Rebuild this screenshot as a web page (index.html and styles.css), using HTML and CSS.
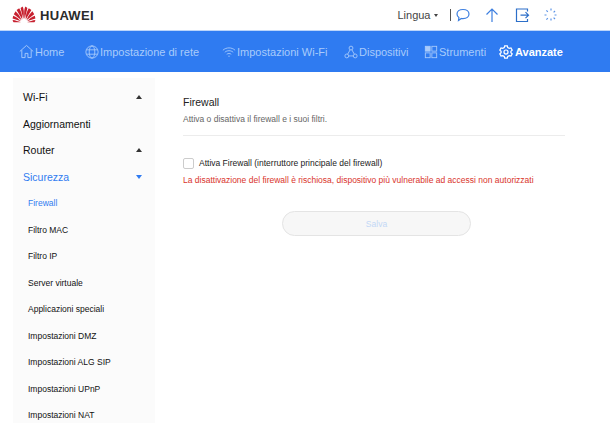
FILE: index.html
```html
<!DOCTYPE html>
<html lang="it">
<head>
    <meta charset="UTF-8">
    <title>Firewall</title>
    <link rel="stylesheet" href="styles.css">
</head>
<body>
    <header class="topbar">
        <div class="brand">
            <svg class="brand-logo" viewBox="0 0 24 18" width="24" height="18">
                <g fill="#c7202f">
                    <path d="M11.3 13 8.6 1.9 10.6.4c1.4 2.500 1.600 7.500.7 12.600z"/>
                    <path d="M12.700 13 15.400 1.900 13.400.4c-1.400 2.500-1.600 7.500-.7 12.600z"/>
                    <path d="M10.300 13.500 4.600 4.100 7.200 2.200c2 3 3.300 7.300 3.100 11.300z"/>
                    <path d="M13.700 13.500 19.400 4.100 16.800 2.200c-2 3-3.300 7.300-3.100 11.300z"/>
                    <path d="M9.500 14.300 1.800 8.300 3.600 5.200c2.500 2.300 4.800 5.600 5.900 9.100z"/>
                    <path d="M14.500 14.300 22.200 8.300 20.400 5.200c-2.500 2.300-4.800 5.600-5.900 9.100z"/>
                    <path d="M9 15.300.6 12.600 1.200 9.700c3 1.200 5.900 3.200 7.800 5.600z"/>
                    <path d="M15 15.300 23.400 12.600 22.800 9.700c-3 1.200-5.900 3.200-7.800 5.600z"/>
                    <path d="M8.700 16.300H1.600c-.6-.6-.9-1.600-1-2.400 2.800.4 5.900 1.200 8.100 2.400z"/>
                    <path d="M15.300 16.300H22.400c.6-.6.9-1.600 1-2.400-2.800.4-5.900 1.200-8.100 2.400z"/>
                </g>
            </svg>
            <span class="brand-name">HUAWEI</span>
        </div>
        <div class="top-actions">
            <span class="lang">Lingua<i class="lang-caret"></i></span>
            <span class="top-sep"></span>
            <svg class="top-icon chat" viewBox="0 0 16 16" width="16" height="16"><path d="M8 2.500c3.600 0 6 2 6 4.600s-2.400 4.600-6 4.600c-.6 0-1.200 0-1.700-.2L3.500 13.500l.4-2.900C2.700 9.800 2 8.600 2 7.100 2 4.500 4.400 2.500 8 2.500z"/></svg>
            <svg class="top-icon up" viewBox="0 0 16 16" width="16" height="16"><path d="M8 15V2M2.500 7.500 8 2l5.500 5.500"/></svg>
            <svg class="top-icon logout" viewBox="0 0 16 16" width="16" height="16"><path d="M13.500 4.500V2H2.500v12.500h11V12M6.500 8.200h8M11.500 5.200l3 3-3 3"/></svg>
            <svg class="top-icon spin" viewBox="0 0 16 16" width="16" height="16"><path d="M8 1.500v3M8 11.500v3M1.500 8h3M11.500 8h3M3.400 3.400l2 2M10.600 10.600l2 2M3.400 12.600l2-2M10.600 5.400l2-2"/></svg>
        </div>
    </header>

    <nav class="mainnav">
        <a class="nav-item">
            <svg viewBox="0 0 16 16" width="15" height="15"><path d="M.8 8 8 1.500 15.200 8M3 6.500V14.500h3.500V10h3v4.500H13V6.500"/></svg>
            Home
        </a>
        <a class="nav-item">
            <svg viewBox="0 0 16 16" width="14" height="14"><circle cx="8" cy="8" r="7"/><ellipse cx="8" cy="8" rx="3.200" ry="7"/><path d="M1.500 5.500h13M1.500 10.500h13"/></svg>
            Impostazione di rete
        </a>
        <a class="nav-item">
            <svg viewBox="0 0 16 16" width="14" height="14"><path d="M1 6c4-3.600 10-3.600 14 0M3.200 8.300c2.800-2.400 6.800-2.400 9.600 0M5.400 10.600c1.500-1.200 3.700-1.200 5.200 0M7.200 12.800h1.600"/></svg>
            Impostazioni Wi-Fi
        </a>
        <a class="nav-item">
            <svg viewBox="0 0 16 16" width="14" height="14"><circle cx="8" cy="3.500" r="2.200"/><circle cx="3.200" cy="12.500" r="2.200"/><circle cx="12.800" cy="12.500" r="2.200"/><path d="M7 5.500 4.200 10.500M9 5.500l2.800 5M5.400 12.500h5.200"/></svg>
            Dispositivi
        </a>
        <a class="nav-item">
            <svg viewBox="0 0 16 16" width="14" height="14"><rect x="1.500" y="1.500" width="5.500" height="5.500" fill="currentColor"/><rect x="9" y="1.500" width="5.500" height="5.500"/><rect x="1.500" y="9" width="5.500" height="5.500"/><rect x="9" y="9" width="5.500" height="5.500"/></svg>
            Strumenti
        </a>
        <a class="nav-item active">
            <svg viewBox="0 0 16 16" width="14" height="14"><path d="M6.500 1h3l.5 2 1.700.9 2-.6 1.400 2.600-1.500 1.400v1.400l1.500 1.400-1.400 2.600-2-.6-1.700.9-.5 2h-3l-.5-2-1.700-.9-2 .6L.9 10.100l1.500-1.400V7.300L.9 5.900l1.400-2.600 2 .6L6 3z"/><circle cx="8" cy="8" r="2.300"/></svg>
            Avanzate
        </a>
    </nav>

    <div class="page">
        <aside class="sidebar">
            <div class="side-row top">Wi-Fi<i class="caret"></i></div>
            <div class="side-row top">Aggiornamenti</div>
            <div class="side-row top">Router<i class="caret"></i></div>
            <div class="side-row top current">Sicurezza<i class="caret down"></i></div>
            <div class="side-row sub current">Firewall</div>
            <div class="side-row sub">Filtro MAC</div>
            <div class="side-row sub">Filtro IP</div>
            <div class="side-row sub">Server virtuale</div>
            <div class="side-row sub">Applicazioni speciali</div>
            <div class="side-row sub">Impostazioni DMZ</div>
            <div class="side-row sub">Impostazioni ALG SIP</div>
            <div class="side-row sub">Impostazioni UPnP</div>
            <div class="side-row sub">Impostazioni NAT</div>
        </aside>

        <main class="content">
            <h1 class="title">Firewall</h1>
            <p class="subtitle">Attiva o disattiva il firewall e i suoi filtri.</p>
            <label class="check-row">
                <span class="checkbox"></span>
                Attiva Firewall (interruttore principale del firewall)
            </label>
            <p class="warning">La disattivazione del firewall è rischiosa, dispositivo più vulnerabile ad accessi non autorizzati</p>
            <button class="save-btn">Salva</button>
        </main>
    </div>
</body>
</html>
```

FILE: styles.css
```css
* {
    box-sizing: border-box;
}
html, body {
    height: 100%;
}
body {
    margin: 0;
    background-color: white;
    font-family: "Liberation Sans", Arial, sans-serif;
    color: #222;
    overflow: hidden;
}

.topbar {
    height: 30px;
    display: flex;
    align-items: center;
    justify-content: space-between;
    padding: 0 51px 0 12px;
}
.brand {
    display: flex;
    align-items: center;
    gap: 4px;
}
.brand-logo {
    display: block;
}
.brand-name {
    font-size: 13px;
    font-weight: bold;
    letter-spacing: 0.3px;
    color: #2b2b2b;
}
.top-actions {
    display: flex;
    align-items: center;
}
.lang {
    font-size: 11px;
    color: #444;
    display: flex;
    align-items: center;
}
.lang-caret {
    margin-left: 3px;
    border-left: 2.500px solid transparent;
    border-right: 2.500px solid transparent;
    border-top: 3px solid #444;
}
.top-sep {
    width: 1.500px;
    height: 12px;
    background-color: #555;
    margin: 0 4px 0 12px;
}
.top-icon {
    fill: none;
    stroke-width: 1.200;
    display: block;
}
.chat {
    stroke: #3d7fe0;
    margin-right: 13px;
}
.up {
    stroke: #3d7fe0;
    margin-right: 14px;
}
.logout {
    stroke: #2c6fc9;
    margin-right: 13px;
}
.spin {
    stroke: #5b93e6;
    stroke-dasharray: 2 1;
}

.mainnav {
    height: 42px;
    background-color: #2f7bf1;
    border-top: 1px solid #bcd5fa;
    padding-left: 19px;
    display: grid;
    grid-template-columns: 66px 137px 122px 80px 75px auto;
    align-items: center;
}
.nav-item {
    display: flex;
    align-items: center;
    gap: 1px;
    font-size: 11px;
    color: #a9cbfb;
    white-space: nowrap;
}
.nav-item svg {
    fill: none;
    stroke: currentColor;
    stroke-width: 1;
    display: block;
}
.nav-item.active {
    color: white;
    font-weight: bold;
    gap: 2px;
}
.nav-item.active svg {
    stroke-width: 1.400;
}

.page {
    display: flex;
    align-items: flex-start;
    padding: 6px 0 0 13px;
}
.sidebar {
    width: 142px;
    background-color: #fbfbfb;
    padding-top: 6px;
    padding-bottom: 20px;
    flex-shrink: 0;
}
.side-row {
    height: 26.500px;
    display: flex;
    align-items: center;
    justify-content: space-between;
    color: #111;
}
.side-row.top {
    font-size: 10.500px;
    padding: 0 13px 0 10px;
}
.side-row.sub {
    font-size: 8.500px;
    padding-left: 15px;
}
.side-row.current {
    color: #2f7bf1;
}
.caret {
    border-left: 3.500px solid transparent;
    border-right: 3.500px solid transparent;
    border-bottom: 4px solid #333;
}
.caret.down {
    border-bottom: none;
    border-top: 4px solid #2f7bf1;
}

.content {
    width: 382px;
    margin-left: 28px;
    padding-top: 18px;
}
.title {
    margin: 0;
    font-size: 10.500px;
    font-weight: normal;
    line-height: 12px;
    color: #222;
}
.subtitle {
    margin: 6px 0 0;
    padding-bottom: 11px;
    font-size: 8.500px;
    line-height: 10px;
    color: #666;
    border-bottom: 1px solid #ececec;
}
.check-row {
    margin-top: 22px;
    display: flex;
    align-items: center;
    gap: 5px;
    font-size: 8.500px;
    line-height: 11px;
    color: #222;
}
.checkbox {
    width: 11px;
    height: 11px;
    border: 1px solid #ccc;
    border-radius: 2px;
    background-color: white;
}
.warning {
    margin: 6px 0 0;
    font-size: 8.500px;
    line-height: 11px;
    color: #d9342b;
    white-space: nowrap;
}
.save-btn {
    display: block;
    width: 189px;
    height: 25px;
    margin: 25px 0 0 99px;
    border: 1px solid #e4e4e4;
    border-radius: 13px;
    background-color: #f7f7f7;
    color: #c3d7f6;
    font-family: inherit;
    font-size: 8.500px;
}
```
